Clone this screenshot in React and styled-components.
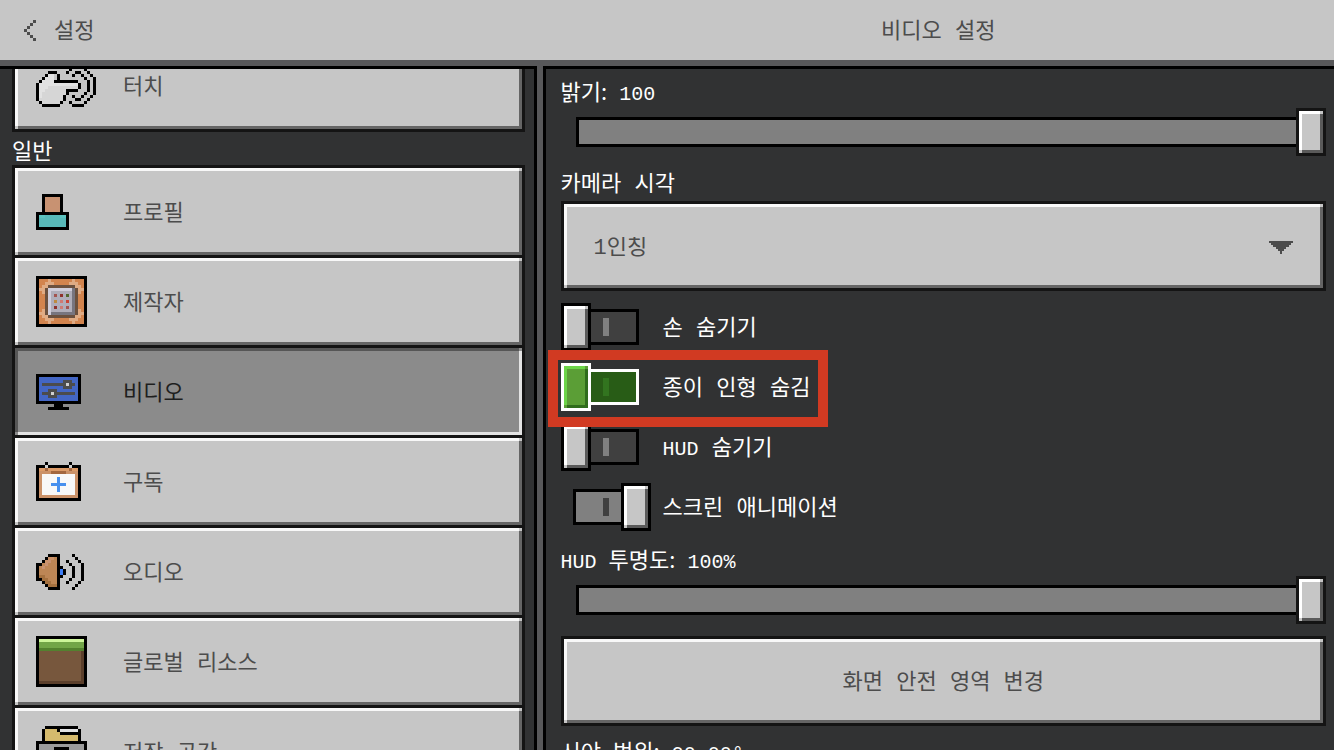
import React, { useState } from "react";
import styled, { createGlobalStyle, css } from "styled-components";

const icons = {
  back: ["...g", "..g.", ".g..", "g...", ".g..", "..g.", "...g"],
  touch: [
    "............####....",
    "...........#....#...",
    "....###...#..##..#..",
    "...#ww.#....#..#..#.",
    "..#www.#........#..#",
    ".#wwww########...#.#",
    "#wwwwwwwwwwwww#..#.#",
    "#wwwvvvvvvvvvv#..#.#",
    "#wwvvvvvvv####...#.#",
    "#wvvvvvvvv#.....#..#",
    "#wvvvvvvv#..#..#..#.",
    "#vvvvvvvv#...##..#..",
    ".#vvvvvv#..#....#...",
    "..######....####....",
  ],
  profile: [
    "..#######..",
    "..#sssss#..",
    "..#sssss#..",
    "..#sssss#..",
    "..#sssss#..",
    "..#sssss#..",
    "###########",
    "#TTtttttTT#",
    "#ttttttttt#",
    "#ttttttttt#",
    "#ttttttttt#",
    "###########",
  ],
  creator: [
    "#################",
    "#oooPoooooooPooo#",
    "#ooPPPoooooPPPoo#",
    "#oPPbbbbbbbbbPPo#",
    "#PPblllllllldbPP#",
    "#oPblmmmmmmmdbPo#",
    "#ooblmrmRmGmdboo#",
    "#ooblmmmmmmmdboo#",
    "#ooblmymqmQmdboo#",
    "#ooblmmmmmmmdboo#",
    "#ooblmRmqmrmdboo#",
    "#oPblmmmmmmmdbPo#",
    "#PPblddddddddbPP#",
    "#oPPbbbbbbbbbPPo#",
    "#ooPPPoooooPPPoo#",
    "#oooPoooooooPooo#",
    "#################",
  ],
  video: [
    "###############",
    "#BBBBBBBBBBBBB#",
    "#BBBBBBBBgggBB#",
    "#BggggggggcggB#",
    "#BBBBBBBBgggBB#",
    "#BBBgggBBBBBBB#",
    "#BgggcgggggggB#",
    "#BBBgggBBBBBBB#",
    "#BBBBBBBBBBBBB#",
    "###############",
    "......###......",
    "....#######....",
  ],
  subscription: [
    "...#.......#...",
    "###c#######c###",
    "#OOnOOOOOOOnOO#",
    "#SSSSnnnnnSSSS#",
    "#SWWWWWWWWWWWS#",
    "#SWWWWWaWWWWWS#",
    "#SWWWWWaWWWWWS#",
    "#SWWWaaaaaWWWS#",
    "#SWWWWWaWWWWWS#",
    "#SWWWWWaWWWWWS#",
    "#SWWWWWWWWWWWS#",
    "#SSSSSSSSSSSSS#",
    "###############",
  ],
  audio: [
    "....####....#...",
    "...#SSk#.....#..",
    "..#Sskk#..#...#.",
    "##kskkk#...#...#",
    "#kskkkk##...#..#",
    "#kkkkkk#A#..#..#",
    "#kkkkkk#A#..#..#",
    "#KKkkkk##...#..#",
    "##KKkkk#...#...#",
    "..#KKkk#..#...#.",
    "...#KKK#.....#..",
    "....####....#...",
  ],
  grass: [
    "#################",
    "#LLLLLLLLLLLLLLL#",
    "#HHHHHHHHHHHHHHH#",
    "#HHHHHHHHHHHHHHH#",
    "#hhhhhhhhhhhhhhh#",
    ...Array(10).fill("#DDDDDDDDDDDDDDe#"),
    "#eeeeeeeeeeeeeee#",
    "#################",
  ],
  storage: [
    "...###########...",
    "..#YYYY#wwwwww#..",
    "..#YYYYY#######..",
    "..#YYYYYYYYYYY#..",
    "..#YYYYYYYYYYY#..",
    "#################",
    "#MMMMMMMMMMMMMMM#",
    "#MMMMM#####MMMMM#",
    ...Array(8).fill("#MMMMMMMMMMMMMMM#"),
    "#################",
  ],
};

const palette = {
  "#": "#000",
  g: "#4c4c4c",
  c: "#d0d0d0",
  w: "#e2e2e2",
  v: "#d6d6d6",
  s: "#c89272",
  t: "#58b9b9",
  T: "#5cc3bf",
  o: "#d2844e",
  P: "#dfab84",
  b: "#6b513f",
  l: "#d0cedb",
  m: "#b0aeba",
  d: "#77757f",
  r: "#a35450",
  R: "#8f322c",
  G: "#53692f",
  y: "#bd8b3f",
  q: "#cf7a72",
  Q: "#cb4434",
  B: "#4366c4",
  O: "#dc9b68",
  S: "#cb9269",
  n: "#a3673f",
  W: "#f8f8f8",
  a: "#4790ee",
  A: "#3c7cf5",
  k: "#bd8655",
  K: "#a5713f",
  L: "#cdf59a",
  H: "#72a548",
  h: "#53812f",
  D: "#77573d",
  e: "#5b3f2b",
  Y: "#d5ba6d",
  M: "#9c9c9c",
};

function PixelIcon({ name }) {
  const rows = icons[name];
  const width = rows[0].length;
  return (
    <svg
      width={width * 3}
      height={rows.length * 3}
      viewBox={`0 0 ${width} ${rows.length}`}
      shapeRendering="crispEdges"
      aria-hidden="true"
    >
      {rows.map((row, y) =>
        [...row].map((cell, x) =>
          palette[cell] ? (
            <rect key={`${x}-${y}`} x={x} y={y} width="1" height="1" fill={palette[cell]} />
          ) : null
        )
      )}
    </svg>
  );
}

const menu = [
  { id: "profile", label: "프로필" },
  { id: "creator", label: "제작자" },
  { id: "video", label: "비디오" },
  { id: "subscription", label: "구독" },
  { id: "audio", label: "오디오" },
  { id: "grass", label: "글로벌 리소스" },
  { id: "storage", label: "저장 공간" },
];

function MenuItem({ id, label, active, onSelect }) {
  return (
    <MenuButton
      type="button"
      $active={active}
      aria-current={active ? "page" : undefined}
      onClick={() => onSelect(id)}
    >
      <PixelIcon name={id} />
      <Text>{label}</Text>
    </MenuButton>
  );
}

function SliderSetting({ id, label, value, unit, max }) {
  const [current, setCurrent] = useState(value);
  return (
    <Setting>
      <ValueLabel htmlFor={id}>
        {label}
        <Latin as="output">
          {current}
          {unit}
        </Latin>
      </ValueLabel>
      <Slider
        id={id}
        type="range"
        min="0"
        max={max}
        value={current}
        onChange={(e) => setCurrent(Number(e.target.value))}
      />
    </Setting>
  );
}

function ToggleSetting({ label, initial, focused }) {
  const [on, setOn] = useState(initial);
  return (
    <ToggleRow>
      <Toggle type="checkbox" checked={on} $focused={focused} onChange={() => setOn(!on)} />
      <Text>{label}</Text>
      {focused && <Marker />}
    </ToggleRow>
  );
}

function App() {
  const [page, setPage] = useState("video");

  return (
    <Screen>
      <GlobalStyle />
      <Header>
        <BackButton type="button">
          <PixelIcon name="back" />
          <Text>설정</Text>
        </BackButton>
        <Title>
          <Text>비디오 설정</Text>
        </Title>
      </Header>
      <Body>
        <Sidebar>
          <MenuGroup>
            <MenuItem id="touch" label="터치" active={page === "touch"} onSelect={setPage} />
          </MenuGroup>
          <GroupTitle>
            <Text>일반</Text>
          </GroupTitle>
          <MenuGroup>
            {menu.map((item) => (
              <MenuItem key={item.id} {...item} active={page === item.id} onSelect={setPage} />
            ))}
          </MenuGroup>
        </Sidebar>
        <Content>
          <SliderSetting id="brightness" label="밝기:" value={100} max={100} />
          <Setting>
            <SettingLabel htmlFor="perspective">
              <Text>카메라 시각</Text>
            </SettingLabel>
            <SelectWrap>
              <Select id="perspective" defaultValue="first">
                <option value="first">1인칭</option>
                <option value="back">3인칭 뒤</option>
                <option value="front">3인칭 앞</option>
              </Select>
              <svg width="24" height="13" viewBox="0 0 24 13" shapeRendering="crispEdges" aria-hidden="true">
                <path
                  fill="#4c4c4c"
                  d="M0 0h24v2h-2v2h-2v2h-3v2h-2v2h-2v3h-2v-3h-2v-2h-2v-2h-3v-2h-2v-2h-2z"
                />
              </svg>
            </SelectWrap>
          </Setting>
          <Toggles>
            <ToggleSetting label="손 숨기기" initial={false} />
            <ToggleSetting label="종이 인형 숨김" initial={false} focused />
            <ToggleSetting label={<><Latin>HUD</Latin> 숨기기</>} initial={false} />
            <ToggleSetting label="스크린 애니메이션" initial={true} />
          </Toggles>
          <SliderSetting
            id="opacity"
            label={<span><Latin>HUD </Latin>투명도:</span>}
            value={100}
            unit="%"
            max={100}
          />
          <WideButton type="button">
            <Text>화면 안전 영역 변경</Text>
          </WideButton>
          <ValueLabel as="p">
            <span>시야<Latin> </Latin>범위:</span>
            <Latin>90.00°</Latin>
          </ValueLabel>
        </Content>
      </Body>
    </Screen>
  );
}

const GlobalStyle = createGlobalStyle`
  *, *::before, *::after {
    box-sizing: border-box;
  }
  body {
    margin: 0;
    background: #313233;
  }
  body, button, select {
    font-family: "Liberation Mono", "Noto Sans CJK KR", monospace;
    font-size: 22px;
    font-weight: 400;
    line-height: 24px;
  }
  button, select, input {
    margin: 0;
    cursor: pointer;
  }
`;

// 3px raised edge, the two mixed corners take the face colour
const bevel = (face, light, dark) => css`
  background:
    linear-gradient(${face}, ${face}) right top / 3px 3px no-repeat,
    linear-gradient(${face}, ${face}) left bottom / 3px 3px no-repeat,
    linear-gradient(${light}, ${light}) left top / 100% 3px no-repeat,
    linear-gradient(${dark}, ${dark}) left bottom / 100% 3px no-repeat,
    linear-gradient(${light}, ${light}) left top / 3px 100% no-repeat,
    linear-gradient(${dark}, ${dark}) right top / 3px 100% no-repeat,
    ${face};
`;

const panelButton = css`
  width: 100%;
  height: 90px;
  border: 3px solid #141414;
  border-radius: 0;
  color: #4c4c4c;
  ${bevel("#c6c6c6", "#f8f8f8", "#656565")}
`;

// Hangul sits high on the monospace baseline, the padding centres it
const Text = styled.span`
  display: block;
  padding-top: 6px;
`;

const Screen = styled.div`
  display: flex;
  flex-direction: column;
  height: 100vh;
  overflow: hidden;
  color: #fff;
`;

const Header = styled.header`
  display: grid;
  grid-template-columns: calc(40% + 9px) 1fr;
  align-items: center;
  flex: none;
  height: 66px;
  background: #c6c6c6;
  border-bottom: 6px solid #58585a;
  color: #4c4c4c;
`;

const BackButton = styled.button`
  display: flex;
  align-items: center;
  justify-self: start;
  gap: 18px;
  padding: 0 24px;
  border: none;
  background: none;
  color: inherit;
`;

const Title = styled.h1`
  margin: 0;
  font-size: inherit;
  font-weight: inherit;
  text-align: center;
`;

const Body = styled.div`
  display: flex;
  flex: 1;
  gap: 6px;
  min-height: 0;
  background: #58585a;
`;

const Sidebar = styled.nav`
  flex: 0 0 calc(40% + 3px);
  padding: 0 9px 0 12px;
  border: solid #000;
  border-width: 3px 3px 0 0;
  background: #313233;
  overflow: hidden;

  > :first-child {
    margin-top: -30px;
  }
`;

const MenuGroup = styled.div`
  display: flex;
  flex-direction: column;
`;

const MenuButton = styled.button`
  ${panelButton}
  display: grid;
  grid-template-columns: 87px 1fr;
  align-items: center;
  height: 93px;
  padding: 0 21px;
  text-align: left;
  ${({ $active }) =>
    $active &&
    css`
      color: #1e1e1e;
      ${bevel("#8b8b8b", "#565656", "#e3e3e3")}
    `}

  & + & {
    margin-top: -3px;
  }
`;

const GroupTitle = styled.h2`
  height: 33px;
  margin: 0;
  padding-top: 4px;
  font-size: inherit;
  font-weight: inherit;
`;

const Content = styled.main`
  display: flex;
  flex-direction: column;
  flex: 1;
  gap: 15px;
  min-width: 0;
  padding: 9px 8px 0 15px;
  border: solid #000;
  border-width: 3px 0 0 3px;
  background: #313233;
  overflow: hidden;
`;

const Setting = styled.div`
  display: flex;
  flex-direction: column;
  flex: none;
  gap: 6px;
`;

const SettingLabel = styled.label`
  display: flex;
  align-items: center;
  flex: none;
  height: 24px;
  margin: 0;
`;

const ValueLabel = styled(SettingLabel)`
  align-items: baseline;
  gap: 12px;
  font-family: "Noto Sans CJK KR", sans-serif;
`;

const Latin = styled.span`
  font-family: "Liberation Mono", monospace;
  font-size: 20px;
  white-space: pre;
`;

const thumb = css`
  width: 30px;
  height: 48px;
  border: 3px solid #141414;
  ${bevel("#c6c6c6", "#fff", "#5a5a5a")}
`;

const Slider = styled.input`
  appearance: none;
  height: 48px;
  margin-left: 15px;
  background: none;

  &::-webkit-slider-runnable-track {
    height: 30px;
    background: #808080;
    box-shadow: inset 0 0 0 3px #000;
  }
  &::-webkit-slider-thumb {
    appearance: none;
    margin-top: -9px;
    box-sizing: border-box;
    ${thumb}
  }
`;

const SelectWrap = styled.div`
  position: relative;

  svg {
    position: absolute;
    top: 40px;
    right: 33px;
    pointer-events: none;
  }
`;

const Select = styled.select`
  ${panelButton}
  display: block;
  appearance: none;
  padding: 6px 30px 0;
`;

const Toggles = styled.div`
  display: flex;
  flex-direction: column;
  align-items: flex-start;
  flex: none;
  gap: 12px;
  margin-top: -3px;
`;

const ToggleRow = styled.label`
  position: relative;
  display: flex;
  align-items: center;
  gap: 12px;
  cursor: pointer;
`;

const Toggle = styled.input`
  appearance: none;
  display: grid;
  grid-template-columns: 90px;
  align-items: center;
  width: 90px;
  height: 48px;

  &::before,
  &::after {
    content: "";
    grid-area: 1 / 1;
  }
  &::before {
    justify-self: center;
    width: 66px;
    height: 36px;
    border: 3px solid #000;
    background: linear-gradient(#808080, #808080) center / 6px 18px no-repeat #404040;
  }
  &::after {
    justify-self: start;
    ${thumb}
    border-color: #000;
  }
  &:checked::before {
    background: linear-gradient(#404040, #404040) center / 6px 18px no-repeat #808080;
  }
  &:checked::after {
    justify-self: end;
  }
  ${({ $focused }) =>
    $focused &&
    css`
      &::before {
        border-color: #fff;
        background: linear-gradient(#32741f, #32741f) center / 6px 18px no-repeat #285c16;
      }
      &::after {
        border-color: #fff;
        ${bevel("#5b9e36", "#6cd548", "#306d1c")}
      }
    `}
`;

const Marker = styled.span`
  position: absolute;
  z-index: 1;
  top: -13px;
  left: -13px;
  width: 280px;
  height: 77px;
  border: 10px solid #d13a22;
  pointer-events: none;
`;

const WideButton = styled.button`
  ${panelButton}
  flex: none;
  margin: -3px 0;
`;

export default App;
